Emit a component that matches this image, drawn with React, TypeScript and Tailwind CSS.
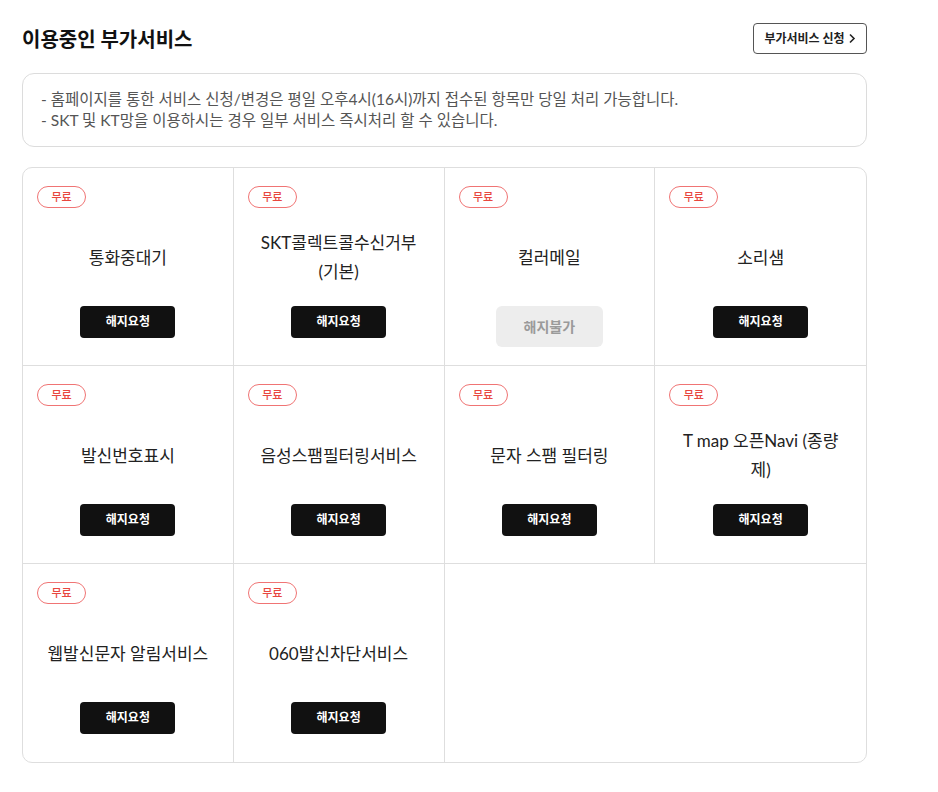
const services = [
  { name: "통화중대기", cancelable: true },
  { name: "SKT콜렉트콜수신거부\n(기본)", cancelable: true },
  { name: "컬러메일", cancelable: false },
  { name: "소리샘", cancelable: true },
  { name: "발신번호표시", cancelable: true },
  { name: "음성스팸필터링서비스", cancelable: true },
  { name: "문자 스팸 필터링", cancelable: true },
  { name: "T map 오픈Navi (종량\n제)", cancelable: true },
  { name: "웹발신문자 알림서비스", cancelable: true },
  { name: "060발신차단서비스", cancelable: true },
];

function ServiceCell({ name, cancelable, index }: { name: string; cancelable: boolean; index: number }) {
  const lastCol = index % 4 === 3;
  const lastRow = index >= 8;
  return (
    <div
      className={`flex h-[198px] flex-col px-[14px] pt-[18px] ${lastCol ? "" : "border-r"} ${
        lastRow ? "" : "border-b"
      } border-[#dedede]`}
    >
      <span className="flex h-[22px] w-[49px] items-center justify-center rounded-full border border-[#f07474] text-[11px] font-medium text-[#e8473f]">
        무료
      </span>
      <div className="flex h-[98px] items-center justify-center whitespace-pre-line text-center text-[17px] leading-[29px] text-[#222]">
        {name}
      </div>
      <div className="flex justify-center">
        {cancelable ? (
          <button className="h-[32px] w-[95px] rounded-[4px] bg-[#111] text-[12px] font-bold text-white">
            해지요청
          </button>
        ) : (
          <button className="h-[41px] w-[107px] rounded-[6px] bg-[#ededed] text-[14px] font-bold text-[#9a9a9a]">
            해지불가
          </button>
        )}
      </div>
    </div>
  );
}

export default function App() {
  return (
    <div
      className="min-h-screen bg-white"
      style={{ fontFamily: 'Lato, "Noto Sans CJK KR", sans-serif' }}
    >
      <div className="ml-[22px] w-[845px] pt-[23px]">
        <div className="flex items-center justify-between">
          <h2 className="m-0 text-[20px] font-bold text-[#111]">이용중인 부가서비스</h2>
          <button className="flex h-[31px] w-[114px] items-center justify-center gap-[3px] rounded-[4px] border border-[#555] text-[12px] font-bold text-[#222]">
            부가서비스 신청
            <svg width="8" height="11" viewBox="0 0 8 11" fill="none">
              <path d="M2 1.5L6 5.5L2 9.5" stroke="#222" strokeWidth="1.6" />
            </svg>
          </button>
        </div>

        <div className="mt-[19px] rounded-[12px] border border-[#dcdcdc] px-[18px] py-[15px] text-[15.5px] leading-[21px] text-[#555]">
          <p className="m-0">- 홈페이지를 통한 서비스 신청/변경은 평일 오후4시(16시)까지 접수된 항목만 당일 처리 가능합니다.</p>
          <p className="m-0">- SKT 및 KT망을 이용하시는 경우 일부 서비스 즉시처리 할 수 있습니다.</p>
        </div>

        <div className="mt-[20px] grid grid-cols-4 overflow-hidden rounded-[10px] border border-[#dedede]">
          {services.map((s, i) => (
            <ServiceCell key={s.name} name={s.name} cancelable={s.cancelable} index={i} />
          ))}
        </div>
      </div>
    </div>
  );
}
